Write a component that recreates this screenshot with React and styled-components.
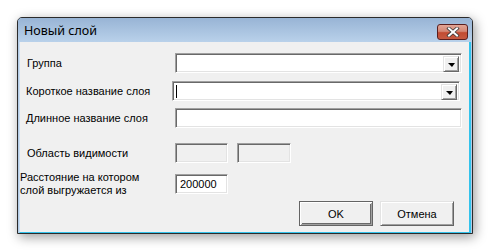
import React from "react";
import styled, { createGlobalStyle } from "styled-components";

const Global = createGlobalStyle`
  html, body { margin: 0; padding: 0; background: #ffffff; }
  body { width: 489px; height: 251px; overflow: hidden; font-family: "Liberation Sans", Arial, sans-serif; }
`;

const Page = styled.div`
  padding: 17px 0 0 17px;
`;

const Window = styled.div`
  width: 456px;
  height: 217px;
  box-sizing: border-box;
  border: 1px solid #2b2b2b;
  border-radius: 5px 5px 0 0;
  background: #b3cbe6;
  box-shadow: 2px 3px 12px rgba(0, 0, 0, 0.4);
  display: flex;
  flex-direction: column;
`;

const TitleBar = styled.div`
  height: 24px;
  flex: none;
  display: flex;
  align-items: center;
  justify-content: space-between;
  padding: 0 4px 0 6px;
  background: linear-gradient(#98b4d5, #b9d1ea);
  border-radius: 4px 4px 0 0;
`;

const Title = styled.span`
  font-family: "Noto Sans", "Open Sans", sans-serif;
  font-size: 12.5px;
  color: #000;
  margin-top: 1px;
`;

const CloseButton = styled.div`
  width: 31px;
  height: 16px;
  box-sizing: border-box;
  border: 1px solid #5a1f1f;
  border-radius: 3px;
  background: linear-gradient(#e2a595 0%, #d48775 45%, #c24b32 55%, #c65a42 100%);
  display: flex;
  align-items: center;
  justify-content: center;
  margin-top: 4px;
`;

const Body = styled.div`
  flex: 1;
  margin: 0 1px 0 1px;
  background: #f0f0f0;
  border-left: 1px solid #cde0f2;
  border-right: 2px solid #33c3ec;
  border-bottom: 1px solid #33c3ec;
  display: flex;
  flex-direction: column;
  padding: 11px 0 0 0;
`;

const Row = styled.div`
  display: flex;
  align-items: center;
  height: ${(p) => p.$h || 20}px;
  margin-top: ${(p) => p.$mt || 0}px;
`;

const Label = styled.div`
  font-size: 11px;
  line-height: 13px;
  color: #000;
  width: ${(p) => p.$w}px;
  padding-left: ${(p) => p.$pl}px;
  box-sizing: border-box;
  flex: none;
`;

const Sunken = styled.div`
  box-sizing: border-box;
  width: ${(p) => p.$w}px;
  height: 20px;
  margin-left: ${(p) => p.$ml || 0}px;
  background: ${(p) => (p.$disabled ? "#f0f0f0" : "#ffffff")};
  border-top: 1px solid #a0a0a0;
  border-left: 1px solid #a0a0a0;
  border-right: 1px solid #ffffff;
  border-bottom: 1px solid #ffffff;
  box-shadow: inset 1px 1px 0 #696969, inset -1px -1px 0 #e3e3e3;
  display: flex;
  align-items: center;
  font-size: 11px;
  padding-left: 4px;
  position: relative;
`;

const DropButton = styled.div`
  position: absolute;
  right: 2px;
  top: 2px;
  width: 16px;
  height: 16px;
  box-sizing: border-box;
  background: #f0f0f0;
  border-top: 1px solid #e3e3e3;
  border-left: 1px solid #e3e3e3;
  border-right: 1px solid #696969;
  border-bottom: 1px solid #696969;
  box-shadow: inset 1px 1px 0 #ffffff, inset -1px -1px 0 #a0a0a0;
  display: flex;
  align-items: center;
  justify-content: center;
`;

const Arrow = styled.div`
  width: 0;
  height: 0;
  border-left: 4px solid transparent;
  border-right: 3px solid transparent;
  border-top: 4px solid #000;
  margin-top: 1px;
`;

const Caret = styled.div`
  width: 1px;
  height: 13px;
  background: #000;
  margin-left: -1px;
`;

const Buttons = styled.div`
  display: flex;
  gap: 7px;
  margin-top: 4px;
  padding-left: 279px;
`;

const Button = styled.div`
  box-sizing: border-box;
  width: 74px;
  height: 25px;
  background: #f0f0f0;
  font-size: 11px;
  display: flex;
  align-items: center;
  justify-content: center;
  border: 1px solid ${(p) => (p.$default ? "#646464" : "#e3e3e3")};
  border-right-color: #646464;
  border-bottom-color: #646464;
  box-shadow: ${(p) =>
    p.$default
      ? "inset 1px 1px 0 #ffffff, inset -1px -1px 0 #a0a0a0, inset 2px 2px 0 #f0f0f0, inset -2px -2px 0 #696969"
      : "inset 1px 1px 0 #ffffff, inset -1px -1px 0 #a0a0a0"};
`;

export default function App() {
  return (
    <>
      <Global />
      <Page>
        <Window>
          <TitleBar>
            <Title>Новый слой</Title>
            <CloseButton>
              <svg width="14" height="10" viewBox="0 0 14 10">
                <path d="M3 1.5 L11 8.5 M11 1.5 L3 8.5" stroke="#3a3a3a" strokeWidth="3.6" strokeLinecap="square" />
                <path d="M3 1.5 L11 8.5 M11 1.5 L3 8.5" stroke="#ffffff" strokeWidth="2" strokeLinecap="square" />
              </svg>
            </CloseButton>
          </TitleBar>
          <Body>
            <Row>
              <Label $w={155} $pl={7}>Группа</Label>
              <Sunken $w={287}>
                <DropButton><Arrow /></DropButton>
              </Sunken>
            </Row>
            <Row $mt={8}>
              <Label $w={152} $pl={6}>Короткое название слоя</Label>
              <Sunken $w={288}>
                <Caret />
                <DropButton><Arrow /></DropButton>
              </Sunken>
            </Row>
            <Row $mt={7}>
              <Label $w={155} $pl={6}>Длинное название слоя</Label>
              <Sunken $w={287} />
            </Row>
            <Row $mt={15}>
              <Label $w={155} $pl={7}>Область видимости</Label>
              <Sunken $w={53} $disabled />
              <Sunken $w={54} $ml={9} $disabled />
            </Row>
            <Row $mt={8} $h={26}>
              <Label $w={155} $pl={0}>Расстояние на котором<br />слой выгружается из</Label>
              <Sunken $w={53}>200000</Sunken>
            </Row>
            <Buttons>
              <Button $default>OK</Button>
              <Button>Отмена</Button>
            </Buttons>
          </Body>
        </Window>
      </Page>
    </>
  );
}
